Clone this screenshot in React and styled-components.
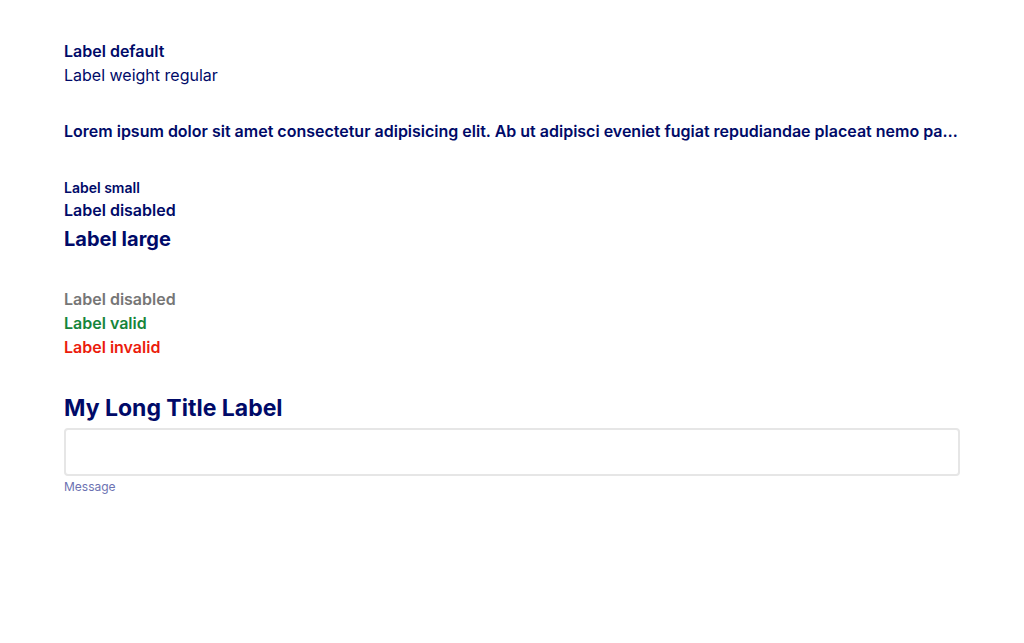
import React from 'react';
import styled, { createGlobalStyle } from 'styled-components';

const GlobalStyle = createGlobalStyle`
  body {
    margin: 0;
    background: #ffffff;
    font-family: Inter, "Noto Sans", sans-serif;
    color: #000a68;
  }
`;

const Page = styled.div`
  padding: 39px 64px;
  width: 896px;
`;

const Group = styled.div`
  display: flex;
  flex-direction: column;
  margin-bottom: ${(p) => p.$gap || 32}px;
`;

const tones = {
  default: '#000a68',
  disabled: '#767676',
  valid: '#15853b',
  invalid: '#eb1b0c',
};

const sizes = {
  small: { font: 14, line: 20 },
  medium: { font: 16, line: 24 },
  large: { font: 20, line: 34 },
  title: { font: 23, line: 32 },
};

const Label = styled.label`
  display: block;
  font-size: ${(p) => sizes[p.$size || 'medium'].font}px;
  line-height: ${(p) => sizes[p.$size || 'medium'].line}px;
  font-weight: ${(p) => (p.$regular ? 400 : p.$size === 'large' || p.$size === 'title' ? 700 : 600)};
  color: ${(p) => tones[p.$tone || 'default']};
  white-space: nowrap;
  overflow: hidden;
  text-overflow: ellipsis;
`;

const Field = styled.div`
  display: flex;
  flex-direction: column;
  gap: 4px;
`;

const Input = styled.input`
  box-sizing: border-box;
  width: 100%;
  height: 48px;
  border: 2px solid #e6e6e6;
  border-radius: 4px;
  padding: 0 12px;
  font: inherit;
  outline: none;
`;

const Message = styled.span`
  margin-top: -1px;
  font-size: 12px;
  line-height: 16px;
  color: #6c72b2;
`;

export default function App() {
  return (
    <>
      <GlobalStyle />
      <Page>
        <Group>
          <Label>Label default</Label>
          <Label $regular>Label weight regular</Label>
        </Group>
        <Group $gap={35}>
          <Label>
            Lorem ipsum dolor sit amet consectetur adipisicing elit. Ab ut adipisci eveniet fugiat repudiandae placeat nemo pariatur, quia voluptatum doloribus.
          </Label>
        </Group>
        <Group $gap={31}>
          <Label $size="small">Label small</Label>
          <Label>Label disabled</Label>
          <Label $size="large">Label large</Label>
        </Group>
        <Group $gap={33}>
          <Label $tone="disabled">Label disabled</Label>
          <Label $tone="valid">Label valid</Label>
          <Label $tone="invalid">Label invalid</Label>
        </Group>
        <Field>
          <Label $size="title">My Long Title Label</Label>
          <Input type="text" />
          <Message>Message</Message>
        </Field>
      </Page>
    </>
  );
}
